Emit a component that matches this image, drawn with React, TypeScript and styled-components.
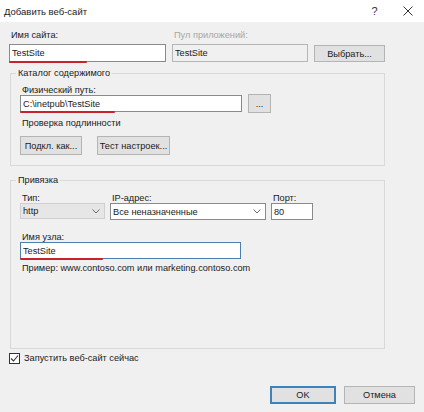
import React from 'react';
import styled, { createGlobalStyle } from 'styled-components';

const GlobalStyle = createGlobalStyle`
  html, body {
    margin: 0;
    padding: 0;
    background: #f0f0f0;
  }
`;

const Dialog = styled.div`
  width: 424px;
  height: 412px;
  background: #f0f0f0;
  font-family: "Liberation Sans", Arial, sans-serif;
  font-size: 9.2px;
  color: #1a1a1a;
  display: flex;
  flex-direction: column;
  overflow: hidden;
`;

const TitleBar = styled.div`
  height: 22px;
  background: #ffffff;
  display: flex;
  align-items: center;
  padding-left: 4px;
  font-size: 9.5px;
`;

const TitleText = styled.div`
  flex: 1;
`;

const TitleButton = styled.div`
  width: 33px;
  height: 22px;
  display: flex;
  align-items: center;
  justify-content: center;
  color: #333;
  font-size: 11px;
`;

const Body = styled.div`
  flex: 1;
  display: flex;
  flex-direction: column;
  padding: 6px 9px 8px 9px;
`;

const Row = styled.div<{ $gap?: number; $mt?: number; $align?: string }>`
  display: flex;
  align-items: ${(p) => p.$align ?? 'flex-end'};
  gap: ${(p) => p.$gap ?? 6}px;
  margin-top: ${(p) => p.$mt ?? 0}px;
`;

const Field = styled.div<{ $w: number }>`
  width: ${(p) => p.$w}px;
  display: flex;
  flex-direction: column;
`;

const Label = styled.div<{ $disabled?: boolean; $mt?: number; $mb?: number }>`
  height: 14px;
  line-height: 14px;
  margin: ${(p) => p.$mt ?? 0}px 0 ${(p) => p.$mb ?? 2}px 2px;
  color: ${(p) => (p.$disabled ? '#a6a6a6' : '#1a1a1a')};
  white-space: nowrap;
`;

const Text = styled.div<{ $mt?: number }>`
  height: 14px;
  line-height: 14px;
  margin-top: ${(p) => p.$mt ?? 0}px;
  padding-left: 2px;
  white-space: nowrap;
`;

const InputBox = styled.div<{ $h?: number; $disabled?: boolean; $focus?: boolean; $mark?: number }>`
  position: relative;
  height: ${(p) => p.$h ?? 18}px;
  box-sizing: border-box;
  border: 1px solid ${(p) => (p.$focus ? '#4a7fb0' : p.$disabled ? '#b5b5b5' : '#8a8a8a')};
  background: ${(p) => (p.$disabled ? '#f0f0f0' : '#ffffff')};
  padding-left: 2px;
  display: flex;
  align-items: center;
  white-space: nowrap;
  &::after {
    content: '';
    display: ${(p) => (p.$mark ? 'block' : 'none')};
    position: absolute;
    left: -1px;
    bottom: -2px;
    width: ${(p) => p.$mark ?? 0}px;
    height: 2px;
    border-radius: 1px;
    background: #c8232c;
  }
`;

const SelectBox = styled(InputBox)<{ $grey?: boolean }>`
  justify-content: space-between;
  padding-right: 4px;
  background: ${(p) => (p.$grey ? '#e6e6e6' : '#ffffff')};
  border-color: ${(p) => (p.$grey ? '#cfcfcf' : '#8a8a8a')};
`;

const Button = styled.div<{ $w: number; $h?: number; $default?: boolean }>`
  width: ${(p) => p.$w}px;
  height: ${(p) => p.$h ?? 18}px;
  box-sizing: border-box;
  background: #e1e1e1;
  border: ${(p) => (p.$default ? '2px solid #3f82b8' : '1px solid #b4b4b4')};
  display: flex;
  align-items: center;
  justify-content: center;
  white-space: nowrap;
`;

const Group = styled.fieldset<{ $h: number; $mt: number }>`
  margin: ${(p) => p.$mt}px 0 0 1px;
  width: 375px;
  padding: 0 10px 0 9px;
  height: ${(p) => p.$h}px;
  box-sizing: border-box;
  border: 1px solid #d9d9d9;
  display: flex;
  flex-direction: column;
  align-items: flex-start;
`;

const Legend = styled.legend`
  margin-left: -4px;
  padding: 0 2px;
  height: 14px;
  line-height: 14px;
`;

const CheckRow = styled.div`
  display: flex;
  align-items: center;
  gap: 4px;
  height: 14px;
  margin-top: 2px;
`;

const CheckBox = styled.div`
  width: 11px;
  height: 11px;
  box-sizing: border-box;
  border: 1px solid #333;
  background: #fff;
  display: flex;
  align-items: center;
  justify-content: center;
`;

const Footer = styled.div`
  margin-top: auto;
  display: flex;
  justify-content: flex-end;
  gap: 8px;
`;

const Chevron = () => (
  <svg width="8" height="5" viewBox="0 0 8 5">
    <path d="M0.5 0.5 L4 4 L7.5 0.5" fill="none" stroke="#6a6a6a" strokeWidth="1" />
  </svg>
);

export default function App() {
  return (
    <Dialog>
      <GlobalStyle />
      <TitleBar>
        <TitleText>Добавить веб-сайт</TitleText>
        <TitleButton>?</TitleButton>
        <TitleButton>
          <svg width="10" height="10" viewBox="0 0 10 10">
            <path d="M0.5 0.5 L9.5 9.5 M9.5 0.5 L0.5 9.5" stroke="#333" strokeWidth="1" />
          </svg>
        </TitleButton>
      </TitleBar>
      <Body>
        <Row $gap={6}>
          <Field $w={157}>
            <Label>Имя сайта:</Label>
            <InputBox $mark={78}>TestSite</InputBox>
          </Field>
          <Field $w={136}>
            <Label $disabled>Пул приложений:</Label>
            <InputBox $disabled>TestSite</InputBox>
          </Field>
          <Button $w={71} $h={17}>Выбрать...</Button>
        </Row>

        <Group $h={100} $mt={4}>
          <Legend>Каталог содержимого</Legend>
          <Label $mt={3} $mb={-3}>Физический путь:</Label>
          <Row $gap={6} $align="center">
            <InputBox $h={17} $mark={95} style={{ width: 222 }}>C:\inetpub\TestSite</InputBox>
            <Button $w={23} $h={19}>...</Button>
          </Row>
          <Text $mt={3}>Проверка подлинности</Text>
          <Row $gap={15} $mt={6}>
            <Button $w={62} $h={19}>Подкл. как...</Button>
            <Button $w={73} $h={19}>Тест настроек...</Button>
          </Row>
        </Group>

        <Group $h={176} $mt={7}>
          <Legend>Привязка</Legend>
          <Row $gap={5} $mt={4} $align="flex-start">
            <Field $w={85}>
              <Label $mb={-2}>Тип:</Label>
              <SelectBox $grey $h={16}>
                http
                <Chevron />
              </SelectBox>
            </Field>
            <Field $w={156}>
              <Label $mb={-2}>IP-адрес:</Label>
              <SelectBox $h={17}>
                Все неназначенные
                <Chevron />
              </SelectBox>
            </Field>
            <Field $w={42}>
              <Label $mb={-2}>Порт:</Label>
              <InputBox $h={17}>80</InputBox>
            </Field>
          </Row>
          <Field $w={221}>
            <Label $mt={10} $mb={-2}>Имя узла:</Label>
            <InputBox $h={17} $focus $mark={83}>TestSite</InputBox>
          </Field>
          <Text $mt={2}>Пример: www.contoso.com или marketing.contoso.com</Text>
        </Group>

        <CheckRow>
          <CheckBox>
            <svg width="9" height="9" viewBox="0 0 9 9">
              <path d="M1 4.5 L3.5 7 L8 1.5" fill="none" stroke="#333" strokeWidth="1.1" />
            </svg>
          </CheckBox>
          Запустить веб-сайт сейчас
        </CheckRow>

        <Footer>
          <Button $w={66} $h={18} $default>OK</Button>
          <Button $w={71} $h={18}>Отмена</Button>
        </Footer>
      </Body>
    </Dialog>
  );
}
